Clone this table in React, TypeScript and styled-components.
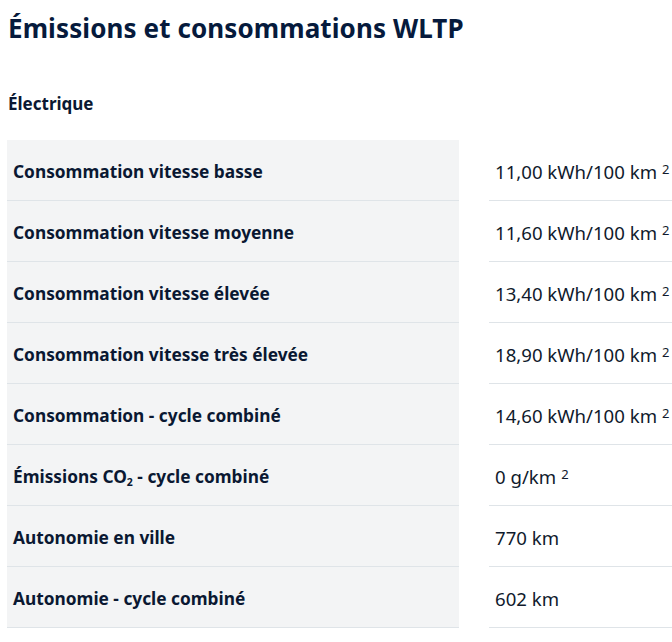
import React from "react";
import styled, { createGlobalStyle } from "styled-components";

const Global = createGlobalStyle`
  html, body { margin: 0; padding: 0; background: #fff; overflow: hidden; }
  body { font-family: "Noto Sans", "Open Sans", sans-serif; color: #0a1832; }
`;

const Page = styled.div`
  width: 672px;
  height: 642px;
  overflow: hidden;
  padding: 12px 0 0 8px;
  box-sizing: border-box;
`;

const Title = styled.h1`
  margin: 0;
  font-size: 26px;
  font-weight: 700;
  line-height: 32px;
  white-space: nowrap;
  letter-spacing: 0.1px;
  color: #061a3c;
`;

const Subtitle = styled.h2`
  margin: 48px 0 0 0;
  font-size: 17px;
  font-weight: 700;
  line-height: 24px;
`;

const Table = styled.div`
  margin: 24px 0 0 -1px;
  display: grid;
  grid-template-columns: 452px 260px;
  column-gap: 30px;
  width: 742px;
`;

const Label = styled.div`
  background: #f3f4f5;
  height: 61px;
  box-sizing: border-box;
  border-bottom: 1px solid #dfe4e8;
  display: flex;
  align-items: center;
  padding: 3px 0 0 6px;
  font-size: 17.3px;
  font-weight: 700;
  white-space: nowrap;
`;

const Value = styled.div`
  height: 61px;
  box-sizing: border-box;
  border-bottom: 1px solid #dfe4e8;
  display: flex;
  align-items: center;
  padding: 3px 0 0 6px;
  font-size: 18.6px;
  font-weight: 400;
  white-space: nowrap;
  color: #101a2c;
`;

const CellText = styled.span`
  line-height: 24px;
`;

const Sup = styled.sup`
  font-size: 13px;
  margin-left: 5px;
  vertical-align: 5px;
  line-height: 0;
`;

const Sub = styled.sub`
  font-size: 10.5px;
  vertical-align: -3px;
  line-height: 0;
`;

type Row = { label: React.ReactNode; value: string; note?: boolean };

const rows: Row[] = [
  { label: "Consommation vitesse basse", value: "11,00 kWh/100 km", note: true },
  { label: "Consommation vitesse moyenne", value: "11,60 kWh/100 km", note: true },
  { label: "Consommation vitesse élevée", value: "13,40 kWh/100 km", note: true },
  { label: "Consommation vitesse très élevée", value: "18,90 kWh/100 km", note: true },
  { label: "Consommation - cycle combiné", value: "14,60 kWh/100 km", note: true },
  {
    label: (
      <>
        Émissions CO<Sub>2</Sub> - cycle combiné
      </>
    ),
    value: "0 g/km",
    note: true,
  },
  { label: "Autonomie en ville", value: "770 km" },
  { label: "Autonomie - cycle combiné", value: "602 km" },
];

export default function App() {
  return (
    <>
      <Global />
      <Page>
        <Title>Émissions et consommations WLTP</Title>
        <Subtitle>Électrique</Subtitle>
        <Table>
          {rows.map((r, i) => (
            <React.Fragment key={i}>
              <Label>
                <CellText>{r.label}</CellText>
              </Label>
              <Value>
                <CellText>
                  {r.value}
                  {r.note && <Sup>2</Sup>}
                </CellText>
              </Value>
            </React.Fragment>
          ))}
        </Table>
      </Page>
    </>
  );
}
